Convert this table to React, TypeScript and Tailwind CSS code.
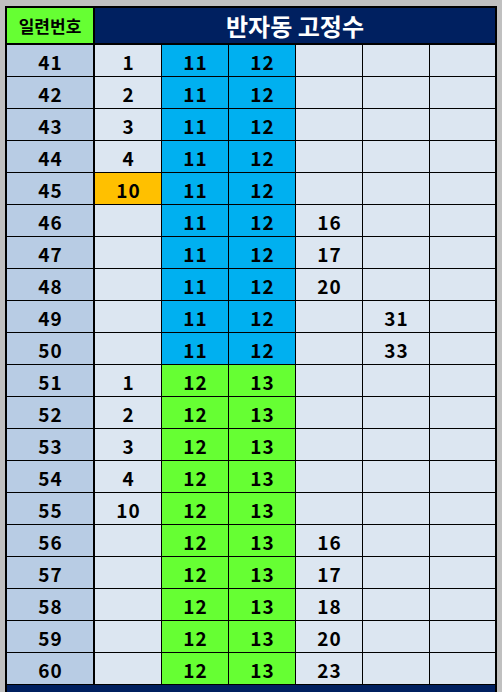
import React from "react";

type Row = { n: number; c2?: string; orange?: boolean; c5?: string; c6?: string; green: boolean };

const rows: Row[] = [
  { n: 41, c2: "1", green: false },
  { n: 42, c2: "2", green: false },
  { n: 43, c2: "3", green: false },
  { n: 44, c2: "4", green: false },
  { n: 45, c2: "10", orange: true, green: false },
  { n: 46, c5: "16", green: false },
  { n: 47, c5: "17", green: false },
  { n: 48, c5: "20", green: false },
  { n: 49, c6: "31", green: false },
  { n: 50, c6: "33", green: false },
  { n: 51, c2: "1", green: true },
  { n: 52, c2: "2", green: true },
  { n: 53, c2: "3", green: true },
  { n: 54, c2: "4", green: true },
  { n: 55, c2: "10", green: true },
  { n: 56, c5: "16", green: true },
  { n: 57, c5: "17", green: true },
  { n: 58, c5: "18", green: true },
  { n: 59, c5: "20", green: true },
  { n: 60, c5: "23", green: true },
];

const font = { fontFamily: '"Noto Sans CJK KR", "Noto Sans", sans-serif' };

export default function App() {
  return (
    <div className="w-[502px] h-[692px] overflow-hidden bg-[#c0c0c0] pl-[5px] pr-[5px] pt-[6px]" style={font}>
      <div className="bg-black pl-[2px] pr-[2px] pt-[2px] h-[700px] flex flex-col">
        <div className="flex h-[35px] gap-[2px]">
          <div className="w-[86px] bg-[#66ff33] flex items-center justify-center text-[17px] font-bold text-black">
            일련번호
          </div>
          <div className="flex-1 bg-[#002060] flex items-center justify-center text-[24px] font-bold text-white pt-[1px]">
            반자동 고정수
          </div>
        </div>
        <div className="mt-[2px] flex flex-col gap-px">
          {rows.map((r) => {
            const mid = r.green ? "bg-[#66ff33]" : "bg-[#00b0f0]";
            return (
              <div
                key={r.n}
                className="grid grid-cols-[87px_66px_66px_66px_66px_66px_65px] gap-x-px h-[31px] text-[19px] font-bold text-black leading-none tracking-[1px]"
              >
                <div className="mr-px bg-[#b8cce4] flex items-center justify-center pl-[1px] pt-[1px]">{r.n}</div>
                <div className={`${r.orange ? "bg-[#ffc000]" : "bg-[#dce6f1]"} flex items-center justify-center pl-[1px] pt-[1px]`}>
                  {r.c2 ?? ""}
                </div>
                <div className={`${mid} flex items-center justify-center pl-[1px] pt-[1px]`}>{r.green ? "12" : "11"}</div>
                <div className={`${mid} flex items-center justify-center pl-[1px] pt-[1px]`}>{r.green ? "13" : "12"}</div>
                <div className="bg-[#dce6f1] flex items-center justify-center pl-[1px] pt-[1px]">{r.c5 ?? ""}</div>
                <div className="bg-[#dce6f1] flex items-center justify-center pl-[1px] pt-[1px]">{r.c6 ?? ""}</div>
                <div className="bg-[#dce6f1]" />
              </div>
            );
          })}
        </div>
        <div className="mt-px h-[20px] bg-[#002060]" />
      </div>
    </div>
  );
}
